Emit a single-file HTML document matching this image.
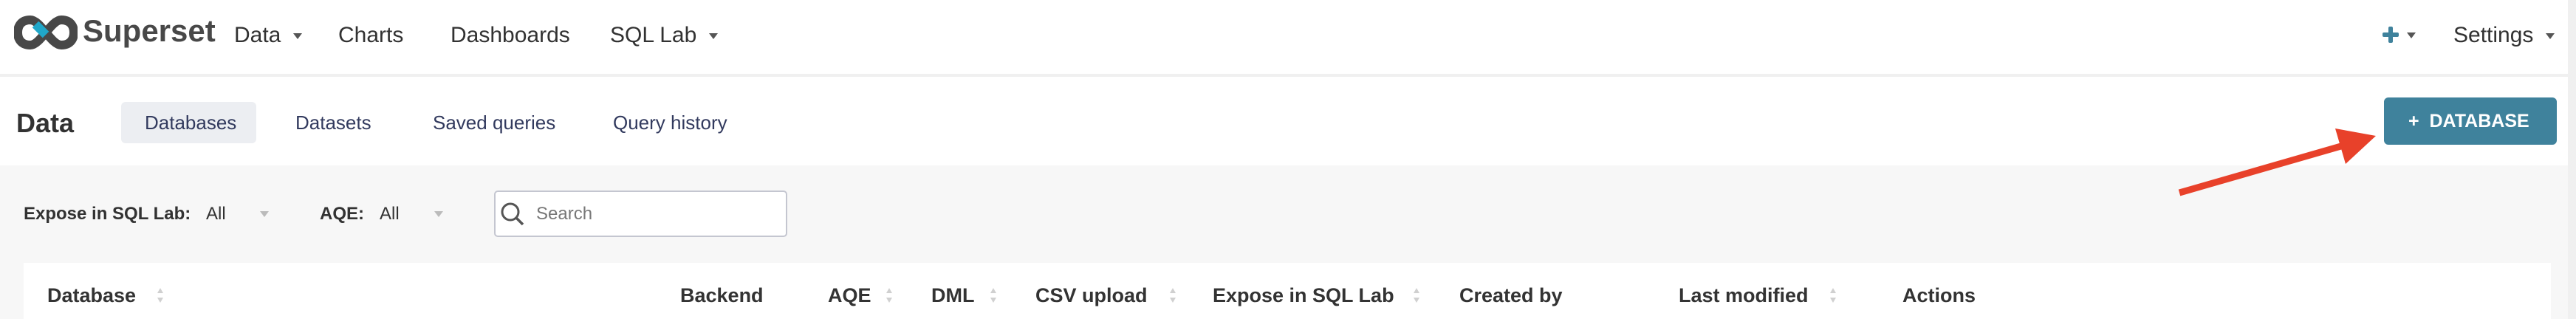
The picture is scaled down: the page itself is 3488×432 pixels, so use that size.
<!DOCTYPE html>
<html><head><meta charset="utf-8"><style>
*{margin:0;padding:0;box-sizing:border-box}
body{width:3488px;height:432px;overflow:hidden;background:#f7f7f7;font-family:"Liberation Sans",Arial,sans-serif;position:relative}
.a{position:absolute;white-space:nowrap}
.nav{color:#323232;font-size:30px;top:31px}
.car{display:inline-block;width:0;height:0;border-left:6px solid transparent;border-right:6px solid transparent;border-top:8px solid #555;vertical-align:middle}
.tab{color:#323a5e;font-size:26px;top:151px}
.flt{font-size:24px;top:276px;color:#323232}
.th{font-size:27px;font-weight:bold;color:#333;top:385px}
.srt{position:absolute;top:390px;width:8px;height:20px}
.srt:before,.srt:after{content:"";position:absolute;left:0;border-left:4px solid transparent;border-right:4px solid transparent}
.srt:before{top:0;border-bottom:7px solid #d0d0d0}
.srt:after{bottom:0;border-top:7px solid #d0d0d0}
</style></head><body>
<div class="a" style="left:0;top:0;width:3488px;height:100px;background:#fff"></div>
<div class="a" style="left:0;top:100px;width:3488px;height:4px;background:#f0f0f0"></div>
<svg class="a" style="left:19px;top:20px" width="86" height="48" viewBox="0 0 86 48">
<path d="M22 7 C9 7 5 16 5 24 C5 32 9 41 22 41 C36 41 50 7 64 7 C77 7 81 16 81 24 C81 32 77 41 64 41 C50 41 36 7 22 7Z" fill="none" stroke="#484848" stroke-width="12"/>
<path d="M29 13 L43 27" stroke="#20a7c9" stroke-width="12"/>
</svg>
<div class="a" style="left:112px;top:18px;font-size:42px;font-weight:bold;color:#484848">Superset</div>
<div class="a nav" style="left:317px">Data <span class="car" style="margin-left:8px"></span></div>
<div class="a nav" style="left:458px">Charts</div>
<div class="a nav" style="left:610px">Dashboards</div>
<div class="a nav" style="left:826px">SQL Lab <span class="car" style="margin-left:8px"></span></div>
<div class="a" style="left:3226px;top:36px;width:22px;height:22px">
<div class="a" style="left:8px;top:0;width:6px;height:22px;background:#3f829c;border-radius:2px"></div>
<div class="a" style="left:0;top:8px;width:22px;height:6px;background:#3f829c;border-radius:2px"></div></div>
<span class="a car" style="left:3259px;top:44px"></span>
<div class="a nav" style="left:3322px">Settings <span class="car" style="margin-left:8px"></span></div>
<div class="a" style="left:0;top:104px;width:3488px;height:120px;background:#fff"></div>
<div class="a" style="left:22px;top:146px;font-size:36px;font-weight:bold;color:#323232">Data</div>
<div class="a" style="left:164px;top:138px;width:183px;height:56px;background:#eceef2;border-radius:6px"></div>
<div class="a tab" style="left:196px">Databases</div>
<div class="a tab" style="left:400px">Datasets</div>
<div class="a tab" style="left:586px">Saved queries</div>
<div class="a tab" style="left:830px">Query history</div>
<div class="a" style="left:3228px;top:132px;width:234px;height:64px;background:#3f829c;border-radius:6px;color:#fff;font-weight:bold;font-size:25px;line-height:64px;padding-left:33px">+&nbsp; DATABASE</div>
<svg class="a" style="left:0;top:0" width="3488" height="432">
<line x1="2951" y1="261" x2="3180" y2="195" stroke="#e8412a" stroke-width="9"/>
<polygon points="3162,174 3217,184 3176,222" fill="#e8412a"/>
</svg>
<div class="a flt" style="left:32px;font-weight:bold">Expose in SQL Lab:</div>
<div class="a flt" style="left:279px">All</div>
<span class="a car" style="left:352px;top:286px;border-top-color:#bbb"></span>
<div class="a flt" style="left:433px;font-weight:bold">AQE:</div>
<div class="a flt" style="left:514px">All</div>
<span class="a car" style="left:588px;top:286px;border-top-color:#bbb"></span>
<div class="a" style="left:669px;top:258px;width:397px;height:63px;background:#fff;border:2px solid #c4c6d0;border-radius:5px"></div>
<svg class="a" style="left:677px;top:273px" width="36" height="36" viewBox="0 0 36 36"><circle cx="14" cy="14" r="11" fill="none" stroke="#555" stroke-width="3"/><line x1="22" y1="22" x2="31" y2="31" stroke="#555" stroke-width="3.5"/></svg>
<div class="a flt" style="left:726px;color:#777">Search</div>
<div class="a" style="left:32px;top:356px;width:3422px;height:76px;background:#fff"></div>
<div class="a" style="left:3477px;top:0;width:11px;height:432px;background:#f0f0f0"></div>
<div class="a th" style="left:64px">Database</div><span class="srt" style="left:213px"></span>
<div class="a th" style="left:921px">Backend</div>
<div class="a th" style="left:1121px">AQE</div><span class="srt" style="left:1200px"></span>
<div class="a th" style="left:1261px">DML</div><span class="srt" style="left:1341px"></span>
<div class="a th" style="left:1402px">CSV upload</div><span class="srt" style="left:1584px"></span>
<div class="a th" style="left:1642px">Expose in SQL Lab</div><span class="srt" style="left:1914px"></span>
<div class="a th" style="left:1976px">Created by</div>
<div class="a th" style="left:2273px">Last modified</div><span class="srt" style="left:2478px"></span>
<div class="a th" style="left:2576px">Actions</div>
</body></html>
